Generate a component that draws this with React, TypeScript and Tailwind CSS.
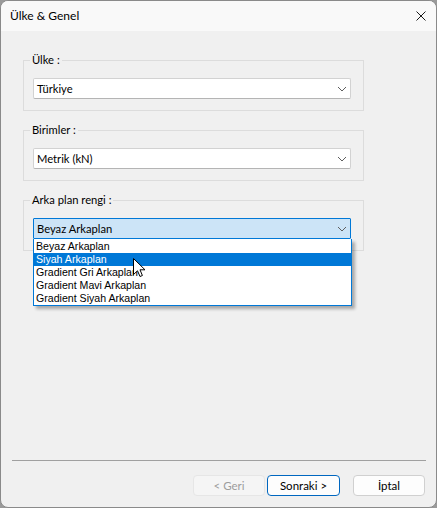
import React from "react";

const ui = { fontFamily: 'Lato, "Noto Sans", sans-serif' };
const list = { fontFamily: '"Liberation Sans", Arial, sans-serif' };

function Chevron() {
  return (
    <svg width="10" height="6" viewBox="0 0 10 6" className="shrink-0">
      <path d="M1 1 L5 5 L9 1" fill="none" stroke="#5f5f5f" strokeWidth="1" />
    </svg>
  );
}

function Group({ label, children }: { label: string; children: React.ReactNode }) {
  return (
    <div className="relative ml-[22px] w-[341px] h-[51px] border border-[#dcdcdc] pt-[17px] pl-[9px]">
      <span className="absolute -top-[8px] left-[6px] px-[2px] bg-[#f0f0f0] text-[11.2px] leading-[14px] text-black">
        {label}
      </span>
      {children}
    </div>
  );
}

function Combo({ value, focused }: { value: string; focused?: boolean }) {
  return (
    <div
      className={
        focused
          ? "w-[318px] h-[21px] flex items-center justify-between pl-[3px] pr-[3px] border border-[#0078d7] bg-[#cce4f7] rounded-[1px]"
          : "w-[318px] h-[21px] flex items-center justify-between pl-[3px] pr-[3px] border border-[#d2d2d2] border-b-[#b4b4b4] bg-white rounded-[2px]"
      }
    >
      <span className="text-[11.2px] leading-[14px] text-black">{value}</span>
      <Chevron />
    </div>
  );
}

const items = ["Beyaz Arkaplan", "Siyah Arkaplan", "Gradient Gri Arkaplan", "Gradient Mavi Arkaplan", "Gradient Siyah Arkaplan"];

export default function App() {
  return (
    <div className="w-[437px] h-[508px] bg-[#9a9a9a]" style={ui}>
      <div className="h-full w-full rounded-[8px] border border-[#8a8a8a] bg-[#f0f0f0] overflow-hidden flex flex-col">
        <div className="h-[30px] shrink-0 bg-[#f9f9f9] flex items-center justify-between pl-[9px] pr-[10px]">
          <span className="text-[12px] text-black">Ülke &amp; Genel</span>
          <svg width="10" height="10" viewBox="0 0 10 10">
            <path d="M0.5 0.5 L9.5 9.5 M9.5 0.5 L0.5 9.5" stroke="#1a1a1a" strokeWidth="1" />
          </svg>
        </div>
        <div className="flex-1 flex flex-col pt-[29px]">
          <div className="flex flex-col gap-[19px]">
            <Group label="Ülke :">
              <Combo value="Türkiye" />
            </Group>
            <Group label="Birimler :">
              <Combo value="Metrik (kN)" />
            </Group>
            <Group label="Arka plan rengi :">
              <div className="relative w-[318px]">
                <Combo value="Beyaz Arkaplan" focused />
                <div
                  className="absolute left-0 top-full w-[319px] z-10 bg-white border-l border-r border-b border-[#0078d7] pt-[1px] shadow-[3px_3px_3px_rgba(0,0,0,0.3)]"
                  style={list}
                >
                  {items.map((it, i) => (
                    <div
                      key={it}
                      className={
                        i === 1
                          ? "h-[13px] leading-[13px] pl-[2px] text-[10.6px] bg-[#0078d7] text-white"
                          : "h-[13px] leading-[13px] pl-[2px] text-[10.6px] text-black"
                      }
                    >
                      {it}
                    </div>
                  ))}
                  <svg
                    width="13"
                    height="20"
                    viewBox="0 0 13 20"
                    className="absolute left-[99px] top-[19px]"
                  >
                    <path
                      d="M0.5 0.5 L0.5 16.5 L4.5 12.8 L7 18.5 L9.4 17.5 L7 11.8 L12 11.8 Z"
                      fill="white"
                      stroke="black"
                      strokeWidth="1"
                      strokeLinejoin="miter"
                    />
                  </svg>
                </div>
              </div>
            </Group>
          </div>
          <div className="flex-1" />
          <div className="ml-[11px] mr-[10px] h-[1px] bg-[#a0a0a0]" />
          <div className="flex justify-end mt-[14px] mb-[11px] mr-[11px]">
            <button className="w-[72px] h-[21px] rounded-[4px] border border-[#e6e6e6] bg-[#f5f5f5] text-[11.5px] text-[#9d9d9d]">
              &lt; Geri
            </button>
            <button className="ml-[2px] w-[73px] h-[21px] rounded-[4px] border border-[#0067c0] bg-[#fdfdfd] text-[11.5px] text-black">
              Sonraki &gt;
            </button>
            <button className="ml-[13px] w-[72px] h-[21px] rounded-[4px] border border-[#d0d0d0] bg-[#fdfdfd] text-[11.5px] text-black">
              İptal
            </button>
          </div>
        </div>
      </div>
    </div>
  );
}
